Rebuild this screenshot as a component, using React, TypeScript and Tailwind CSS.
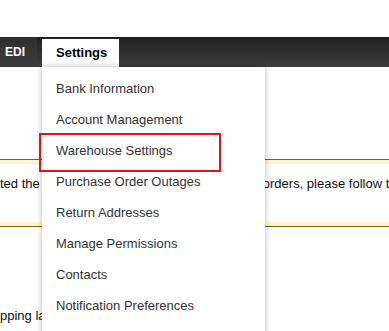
import { useState } from "react";

const items = [
  "Bank Information",
  "Account Management",
  "Warehouse Settings",
  "Purchase Order Outages",
  "Return Addresses",
  "Manage Permissions",
  "Contacts",
  "Notification Preferences",
];

function SettingsMenu() {
  return (
    <div className="absolute left-[42px] top-[67px] w-[223px] h-[280px] bg-white pt-[6px] shadow-[0_0_6px_rgba(0,0,0,0.28)]">
      {items.map((label) => (
        <div key={label} className="h-[31px] flex items-center pl-[14px] text-[13px] text-[#333] whitespace-nowrap">
          {label}
        </div>
      ))}
      {/* annotation around Warehouse Settings */}
      <div className="absolute left-[-3px] top-[66px] w-[182px] h-[39px] border-2 border-[#e8111a] pointer-events-none" />
    </div>
  );
}

export default function App() {
  const [open] = useState(true);
  return (
    <div className="relative w-full h-[331px] overflow-hidden bg-white font-['Liberation_Sans',Arial,sans-serif] text-[#111]">
      <div className="h-[37px]" />
      <nav className="h-[30px] flex bg-gradient-to-b from-[#202020] to-[#3e3e3e]">
        <div className="w-[37px] flex items-center pl-[5px] bg-gradient-to-b from-[#2e2e2e] to-[#3c3c3c] text-[12px] font-bold text-white">
          EDI
        </div>
        <div className="ml-[5px] mt-[2px] w-[77px] flex items-center pl-[14px] bg-white text-[13px] font-bold text-black">
          Settings
        </div>
      </nav>
      <div className="h-[92px]" />
      <div className="h-[68px] border-y border-[#8c6400] shadow-[inset_0_4px_0_#fcf4d4,inset_0_-4px_0_#fcf4d4] pt-[14px] overflow-hidden">
        <p className="whitespace-nowrap text-[13px] leading-[19px] text-[#111]">
          ted the Purchase Order Outages. To block all orders, please follow the steps below.
        </p>
      </div>
      <p className="mt-[79px] whitespace-nowrap text-[13px] leading-[19px] text-[#111]">
        pping label settings for your warehouse.
      </p>
      {open && <SettingsMenu />}
    </div>
  );
}
